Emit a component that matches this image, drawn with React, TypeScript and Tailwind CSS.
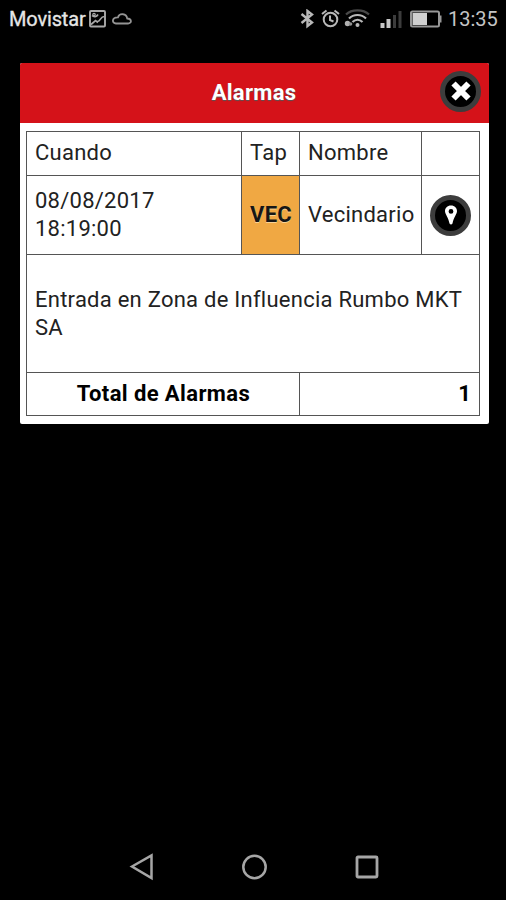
import React from "react";

const StatusBar: React.FC = () => (
  <header className="flex h-[38px] items-center pl-[9px] pr-2 text-[20px] leading-none text-[#c4c4c4]">
    <span className="w-[77px] whitespace-nowrap tracking-[-0.15px] text-[#e6e6e6] [-webkit-text-stroke:0.3px_#e6e6e6]">
      Movistar
    </span>
    {/* Notificaciones */}
    <svg className="ml-[3px]" width="18" height="18" viewBox="0 0 18 18" fill="none" stroke="#a8a8a8">
      <rect x="1" y="1" width="15" height="15.5" rx="1" strokeWidth="1.9" />
      <path d="M2 14.5L6.5 10.5L9 12.5M8.5 11.5C12 11 11 6.5 15.5 6.5M3 5.5C5 7.5 7.5 7 9 4.5" strokeWidth="1.7" />
      <circle cx="5" cy="4.5" r="1.2" strokeWidth="1.2" />
    </svg>
    <svg className="ml-[5px]" width="20" height="14" viewBox="0 0 20 14" fill="none" stroke="#949494" strokeWidth="1.8">
      <path d="M4 11.500H16C20 11.300 20 6.800 15.200 6.500C14.500 1.300 7.500 .800 6 5.300C-.2 5-.5 11.300 4 11.500Z" />
    </svg>

    {/* Bluetooth, alarma, wifi, cobertura y bateria */}
    <svg className="ml-auto" width="14" height="20" viewBox="0 0 14 20" fill="none" stroke="#b8b8b8" strokeWidth="2.4">
      <path d="M1.500 5L12 13.500L7.500 17V2L12 5.500L1.500 14" />
    </svg>
    <svg className="ml-1.5" width="20" height="20" viewBox="0 0 20 20" fill="none" stroke="#b8b8b8" strokeWidth="2">
      <circle cx="10.500" cy="10.500" r="6.800" />
      <path d="M2 5L6.500 1.500M14.500 1.500L19 5M10 6.500V11L13.500 12.500" />
    </svg>
    <svg className="ml-1" width="26" height="20" viewBox="0 0 26 20" fill="none" strokeWidth="2.2">
      <path d="M2 5.500C7.500 0 19.500 0 25 5.500" stroke="#484848" />
      <path d="M5 9.500C9.500 4.800 17.500 4.800 22 9.500M8.500 13C11.500 10 15.500 10 18.500 13" stroke="#b8b8b8" />
      <circle cx="13.500" cy="16" r="2" fill="#b8b8b8" />
      <circle cx="3.500" cy="14.500" r="2.700" fill="#b0b0b0" />
      <circle cx="6.500" cy="15" r="1.800" fill="#909090" />
    </svg>
    <svg className="ml-2.5" width="22" height="19" viewBox="0 0 22 19">
      <rect x=".5" y="13" width="4" height="5" fill="#c8c8c8" />
      <rect x="6.500" y="9" width="4" height="9" fill="#c8c8c8" />
      <rect x="13" y="5" width="3" height="13" fill="#3c3c3c" />
      <rect x="18.500" y="1" width="3" height="17" fill="#3c3c3c" />
    </svg>
    <svg className="ml-[7px]" width="33" height="19" viewBox="0 0 33 19">
      <rect x="2" y="1.500" width="28" height="15" rx="1.500" fill="none" stroke="#989898" strokeWidth="2" />
      <rect x="3.500" y="3" width="14.500" height="12" fill="#d0d0d0" />
      <rect x="30.500" y="5.500" width="2" height="7" fill="#989898" />
    </svg>
    <span className="ml-[6px] w-[50px] whitespace-nowrap">13:35</span>
  </header>
);

const RoundButton: React.FC<{ label: string; children: React.ReactNode }> = ({ label, children }) => (
  <button
    aria-label={label}
    className="flex size-[41px] shrink-0 items-center justify-center rounded-full border-5 border-[#3d3d3d] bg-black"
  >
    {children}
  </button>
);

const cell = "flex items-center border-r border-b border-[#555] px-2";

const AlarmTable: React.FC = () => (
  <div className="grid w-[454px] grid-cols-[215px_58px_122px_58px] grid-rows-[44px_79px_118px_43px] border-t border-l border-[#555] text-[22px] leading-7 tracking-[0.25px] text-[#222]">
    <div className={`${cell} pb-0.5`}>Cuando</div>
    <div className={`${cell} pb-0.5`}>Tap</div>
    <div className={`${cell} pb-0.5`}>Nombre</div>
    <div className={cell} />

    <div className={cell}>
      08/08/2017
      <br />
      18:19:00
    </div>
    <div className="flex items-center justify-center border-r border-b border-[#555] bg-[#f0a843] pl-px font-bold text-[#161616] [text-shadow:0_1px_0_#f8d295]">
      VEC
    </div>
    <div className={cell}>Vecindario</div>
    <div className="flex items-center justify-center border-r border-b border-[#555]">
      <RoundButton label="Ver en el mapa">
        <svg width="14" height="20" viewBox="0 0 14 20">
          <path
            fill="#fff"
            fillRule="evenodd"
            d="M7 .5C3.300 .5 1 3 1 6.200C1 9 4.500 12.500 5.500 18.500Q7 20.500 8.500 18.500C9.500 12.500 13 9 13 6.200C13 3 10.700 .5 7 .5ZM7 4A2.400 2.400 0 1 1 7 8.800A2.400 2.400 0 0 1 7 4Z"
          />
        </svg>
      </RoundButton>
    </div>

    <div className={`${cell} col-span-4`}>
      <p>Entrada en Zona de Influencia Rumbo MKT SA</p>
    </div>

    <div className="col-span-2 flex items-center justify-center border-r border-b border-[#555] pl-px font-bold tracking-[0.4px] text-black">
      Total de Alarmas
    </div>
    <div className={`${cell} col-span-2 justify-end font-bold text-black`}>1</div>
  </div>
);

const AlarmPanel: React.FC = () => (
  <section className="ml-5 mt-[25px] w-[469px] overflow-hidden rounded-xs bg-white pb-2">
    <div className="grid h-[60px] grid-cols-[1fr_auto_1fr] items-center bg-[#d51219] pl-[7px] pr-2 pb-1">
      <h1 className="col-start-2 pt-[3px] text-[22px] font-bold leading-7 tracking-[0.3px] text-white [text-shadow:0_1px_1px_#555]">
        Alarmas
      </h1>
      <div className="flex justify-end">
        <RoundButton label="Cerrar">
          <svg width="22" height="22" viewBox="0 0 22 22" stroke="#fff" strokeWidth="6" strokeLinejoin="round">
            <path d="M3.500 3.500L18.500 18.500M18.500 3.500L3.500 18.500" />
          </svg>
        </RoundButton>
      </div>
    </div>
    <div className="ml-1.5 mt-2">
      <AlarmTable />
    </div>
  </section>
);

const NavBar: React.FC = () => (
  <nav className="mt-auto flex h-[66px] items-center justify-center gap-[88px] text-[#a6a6a6]">
    <svg width="25" height="28" viewBox="0 0 25 28" fill="none" stroke="currentColor" strokeWidth="2.5">
      <path d="M4 13.500L23.500 2.500V25Z" />
    </svg>
    <svg width="26" height="26" viewBox="0 0 26 26" fill="none" stroke="currentColor" strokeWidth="2.500">
      <circle cx="13.500" cy="13" r="11.200" />
    </svg>
    <svg width="24" height="24" viewBox="0 0 24 24" fill="none" stroke="currentColor" strokeWidth="2.800">
      <rect x="2" y="2" width="20" height="20" rx="1" />
    </svg>
  </nav>
);

export default function App() {
  return (
    <div className="flex h-[900px] w-[506px] flex-col overflow-hidden bg-black font-['Roboto',sans-serif]">
      <StatusBar />
      <AlarmPanel />
      <NavBar />
    </div>
  );
}
